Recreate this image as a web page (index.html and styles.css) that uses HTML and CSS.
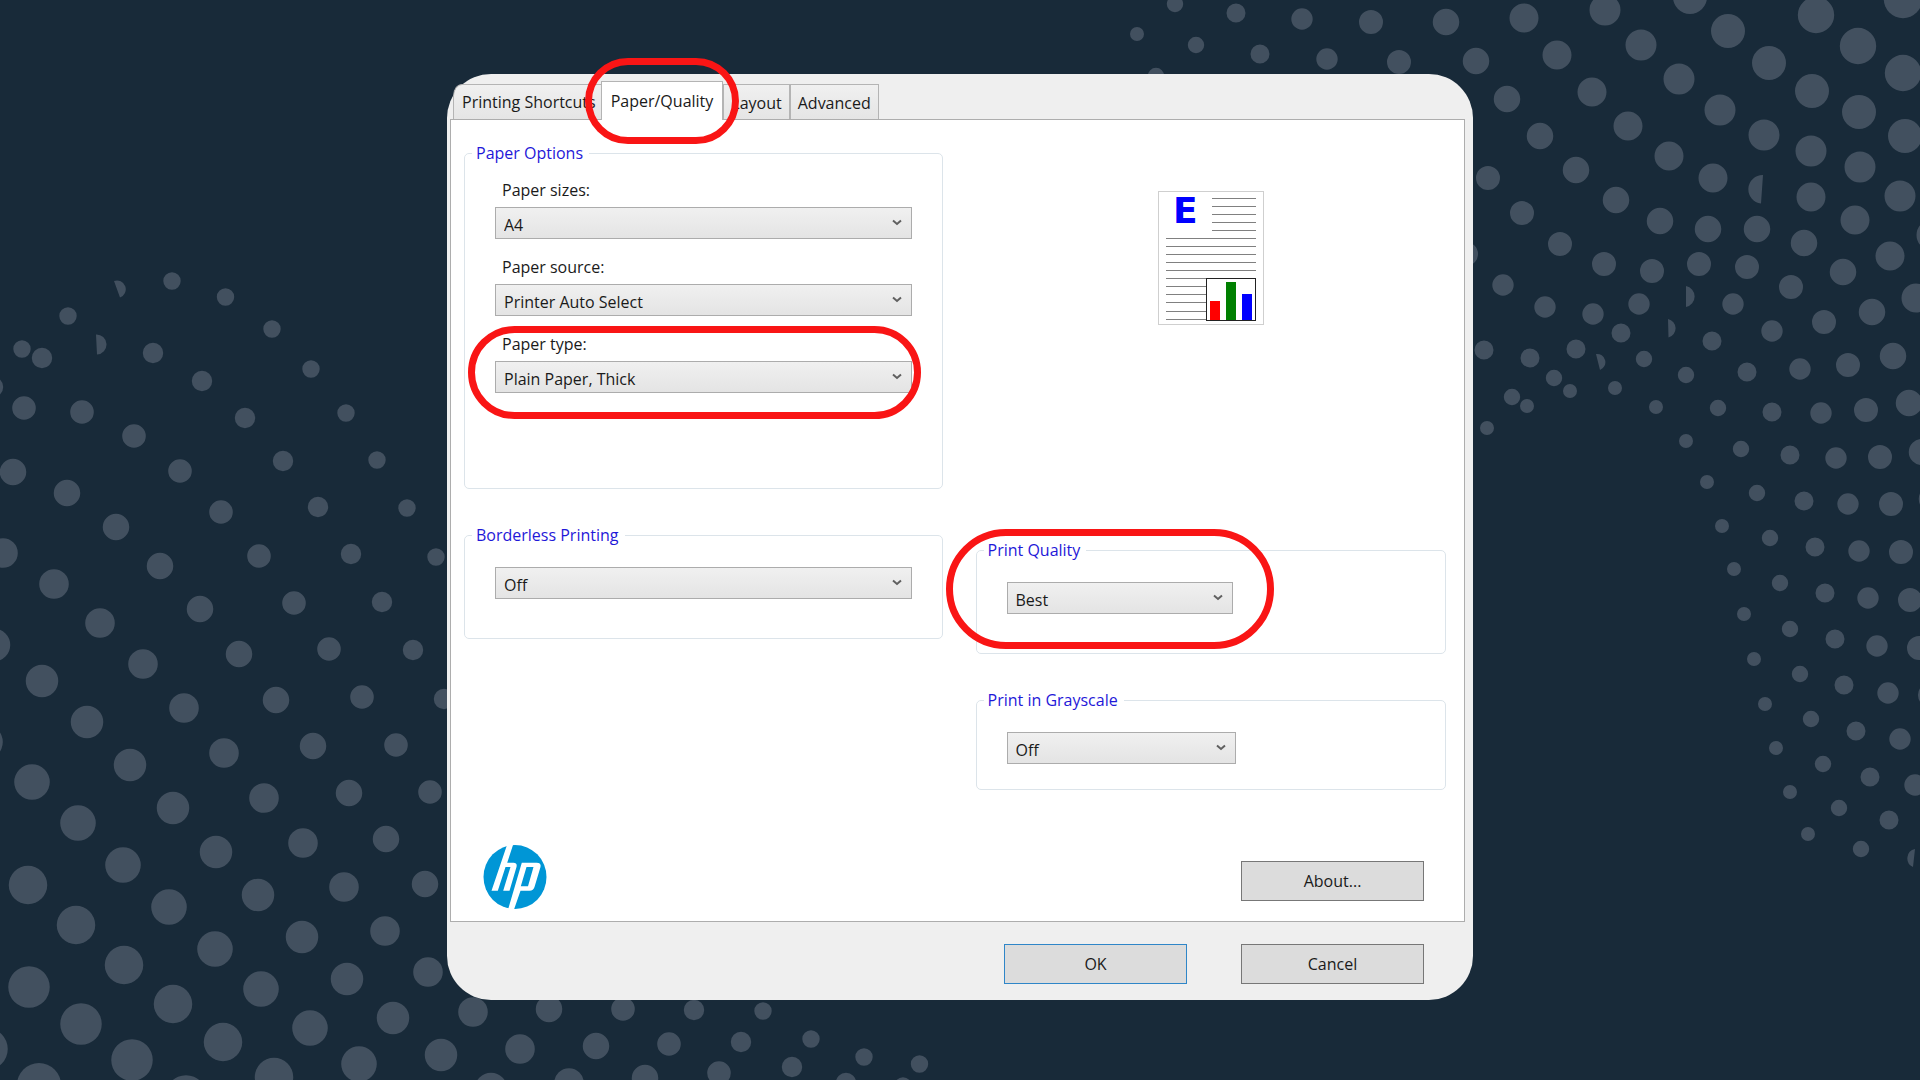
FILE: index.html
```html
<!DOCTYPE html>
<html lang="en">
<head>
	<meta charset="UTF-8">
	<title>Printing Preferences</title>
	<meta name="viewport" content="width=device-width, initial-scale=1.0">
	<link rel="stylesheet" href="styles.css">
</head>
<body>
	<!-- dotted backdrop: every zero-length segment is one round dot -->
	<svg class="backdrop" viewBox="0 0 1920 1080" preserveAspectRatio="xMidYMid slice" aria-hidden="true">
		<g class="backdrop--dots">
			<!-- left swirl -->
			<path stroke-width="17.4" d="M172 281h0M225.500 297h0M272 329h0M68 316h0M22 349h0M311 369h0M346 413h0M377 460h0M407 508h0M436 557h0M763 1011h0M811 1039h0M864 1057h0M919.500 1064h0M903 1086h0"/>
			<path stroke-width="20.400" d="M42 358h0M153 353h0M202 381h0M245 418h0M283 461h0M318 507h0M351 554h0M382 602h0M413 650h0M444 699h0M-7 387h0M694 1010h0M741 1042h0M792 1067h0M846 1083h0"/>
			<path stroke-width="23.600" d="M24 408h0M82 412h0M134 436h0M180 471h0M221 512h0M259 556h0M294 603h0M329 649h0M362 697h0M396 745h0M430 792h0M623 1009h0M669 1044h0M719 1073h0"/>
			<path stroke-width="26.500" d="M13 472h0M67 493h0M116 527h0M160 566h0M200 609h0M239 654h0M276 700h0M313 746h0M349 793h0M386 839h0M425 884h0M549 1009h0M596 1046h0M645 1078h0"/>
			<path stroke-width="29.600" d="M3 553h0M54 584h0M100 623h0M143 664h0M184 708h0M224 753h0M264 798h0M303 843h0M344 887h0M385 931h0M428 972h0M473 1012h0M520 1049h0M569 1083h0"/>
			<path stroke-width="32.500" d="M-6 645h0M42 681h0M87 722h0M130 765h0M173 808h0M216 852h0M258 895h0M302 937h0M347 979h0M393 1018h0M441 1055h0M491 1089h0"/>
			<path stroke-width="35.600" d="M-15 742h0M32 782h0M78 823h0M123 865h0M169 907h0M215 949h0M261 989h0M310 1028h0M359 1064h0"/>
			<path stroke-width="38.500" d="M28 885h0M76 925h0M124 965h0M173 1004h0M223 1042h0M274 1077h0"/>
			<path stroke-width="41.500" d="M29 987h0M81 1024h0M132 1060h0M186 1096h0M-13 1049h0"/>
			<path stroke-width="44" d="M39 1085h0"/>
			<!-- right swirl -->
			<path stroke-width="14" d="M1137 34h0M1527 406h0M1570 391h0M1615 388h0M1656 407h0M1487 428h0M1686 441h0M1707 482h0M1722 526h0M1734 569h0M1744 614h0M1754 659h0M1765 704h0M1776 748h0M1790 792h0M1808 834h0"/>
			<path stroke-width="16.400" d="M1175 4h0M1196 45h0M1156 76h0M1554 378h0M1512 397h0M1644 359h0M1686 375h0M1718 408h0M1741 449h0M1757 493h0M1770 538h0M1780 583h0M1790 629h0M1800 674h0M1811 719h0M1823 764h0M1839 808h0M1861 849h0"/>
			<path stroke-width="19" d="M1236 13h0M1260 54h0M1484 350h0M1530 358h0M1576 349h0M1621 333h0M1712 341h0M1747 372h0M1772 412h0M1790 455h0M1804 501h0M1815 547h0M1825 593h0M1835 639h0M1844 685h0M1856 731h0M1870 777h0M1889 820h0"/>
			<path stroke-width="21.400" d="M1302 19h0M1327 59h0M1503 285h0M1545 307h0M1593 314h0M1639 304h0M1733 304h0M1772 331h0M1800 369h0M1821 413h0M1836 458h0M1848 504h0M1859 551h0M1868 598h0M1877 646h0M1888 693h0M1900 739h0M1915 785h0"/>
			<path stroke-width="24" d="M1371 22h0M1399 62h0M1466 254h0M1488 178h0M1522 213h0M1560 244h0M1604 264h0M1652 271h0M1699 264h0M1747 267h0M1791 287h0M1824 322h0M1848 365h0M1866 410h0M1880 457h0M1891 504h0M1901 552h0M1910 600h0M1919 648h0M1930 695h0"/>
			<path stroke-width="26.500" d="M1446 22h0M1476 61h0M1507 99h0M1540 136h0M1576 170h0M1616 200h0M1660 221h0M1708 229h0M1757 229h0M1804 243h0M1843 272h0M1872 312h0M1893 356h0M1909 403h0M1922 452h0M1932 499h0"/>
			<path stroke-width="29" d="M1524 18h0M1557 55h0M1592 92h0M1628 126h0M1669 156h0M1713 178h0M1811 197h0M1855 220h0M1890 256h0M1916 298h0"/>
			<path stroke-width="31" d="M1605 10h0M1641 45h0M1679 79h0M1720 110h0M1764 135h0M1811 151h0M1860 167h0M1900 196h0M1932 235h0"/>
			<path stroke-width="34" d="M1690 -3h0M1728 31h0M1769 63h0M1812 91h0M1859 112h0M1905 136h0"/>
			<path stroke-width="36.400" d="M1816 15h0M1858 46h0M1903 73h0"/>
			<path stroke-width="38.500" d="M1903 -1h0"/>
		</g>
		<!-- half dots on the seams -->
		<path class="backdrop--halves" d="M114 281A8.700 8.700 0 0 1 120 297.500ZM96 334.500A10 10 0 0 1 97 354.500ZM1763 175A14.300 14.300 0 0 0 1761 203.500ZM1686 286A10.700 10.700 0 0 1 1686 307ZM1668 319A9.500 9.500 0 0 1 1668.500 337.500ZM1596 354A8.300 8.300 0 0 1 1600 370ZM1915 849A9.500 9.500 0 0 0 1913 867Z"/>
	</svg>

	<main class="window">
		<div class="tabs" role="tablist">
			<button class="tab tab-first" role="tab" type="button">Printing Shortcuts</button>
			<button class="tab tab-active" role="tab" type="button" aria-selected="true">Paper/Quality<span class="mark mark-tab"></span></button>
			<button class="tab" role="tab" type="button">Layout</button>
			<button class="tab" role="tab" type="button">Advanced</button>
		</div>

		<form class="panel">
			<div class="columns">
				<div class="column">
					<fieldset class="group group-paper">
						<legend class="group--title">Paper Options</legend>
						<div class="group--fields">
							<div class="field">
								<label class="field--label" for="paperSize">Paper sizes:</label>
								<div class="dropdown">
									<select class="dropdown--select" id="paperSize"><option>A4</option></select>
									<svg class="dropdown--arrow" viewBox="0 0 10 7"><path d="M1 1.500 5 5 9 1.500"/></svg>
								</div>
							</div>
							<div class="field">
								<label class="field--label" for="paperSource">Paper source:</label>
								<div class="dropdown">
									<select class="dropdown--select" id="paperSource"><option>Printer Auto Select</option></select>
									<svg class="dropdown--arrow" viewBox="0 0 10 7"><path d="M1 1.500 5 5 9 1.500"/></svg>
								</div>
							</div>
							<div class="field">
								<label class="field--label" for="paperType">Paper type:</label>
								<div class="dropdown">
									<select class="dropdown--select" id="paperType"><option>Plain Paper, Thick</option></select>
									<svg class="dropdown--arrow" viewBox="0 0 10 7"><path d="M1 1.500 5 5 9 1.500"/></svg>
								</div>
								<span class="mark mark-type"></span>
							</div>
						</div>
					</fieldset>

					<fieldset class="group">
						<legend class="group--title" id="borderlessTitle">Borderless Printing</legend>
						<div class="group--single">
							<div class="dropdown">
								<select class="dropdown--select" aria-labelledby="borderlessTitle"><option>Off</option></select>
								<svg class="dropdown--arrow" viewBox="0 0 10 7"><path d="M1 1.500 5 5 9 1.500"/></svg>
							</div>
						</div>
					</fieldset>
				</div>

				<div class="column">
					<div class="preview">
						<svg class="preview--page" viewBox="0 0 106 134" role="img" aria-label="Page preview">
							<rect x="0.500" y="0.500" width="105" height="133" fill="#fff" stroke="#cfcfcf"/>
							<path stroke="#808080" d="M54 7.500h44M54 15.500h44M54 23.500h44M54 31.500h44M54 39.500h44M8 47.500h90M8 55.500h90M8 63.500h90M8 71.500h90M8 79.500h90M8 87.500h40M8 95.500h40M8 103.500h40M8 111.500h40M8 120.500h40M8 128.500h40"/>
							<text class="preview--letter" x="15" y="32">E</text>
							<rect x="48.500" y="87.500" width="49" height="42" fill="#fff" stroke="#222"/>
							<path fill="#f00" d="M52 110h10v19H52z"/>
							<path fill="#008000" d="M68 91h10v38H68z"/>
							<path fill="#00f" d="M84 103h10v26H84z"/>
						</svg>
					</div>

					<fieldset class="group">
						<legend class="group--title" id="qualityTitle">Print Quality</legend>
						<div class="group--single">
							<div class="dropdown dropdown-quality">
								<select class="dropdown--select" aria-labelledby="qualityTitle"><option>Best</option></select>
								<svg class="dropdown--arrow" viewBox="0 0 10 7"><path d="M1 1.500 5 5 9 1.500"/></svg>
								<span class="mark mark-quality"></span>
							</div>
						</div>
					</fieldset>

					<fieldset class="group group-low">
						<legend class="group--title" id="grayscaleTitle">Print in Grayscale</legend>
						<div class="group--single">
							<div class="dropdown dropdown-grayscale">
								<select class="dropdown--select" aria-labelledby="grayscaleTitle"><option>Off</option></select>
								<svg class="dropdown--arrow" viewBox="0 0 10 7"><path d="M1 1.500 5 5 9 1.500"/></svg>
							</div>
						</div>
					</fieldset>
				</div>
			</div>

			<div class="brand">
				<svg class="brand--logo" viewBox="0 0 63 64" role="img" aria-label="HP">
					<ellipse cx="31.500" cy="32" rx="31.500" ry="32" fill="#0096d6"/>
					<path fill="#fff" d="M23.500 0H29.500L23.700 17.700H30Q34 17.700 33 22L26 45.700H19.700L27 22H22L14.300 45.700H8z"/>
					<path fill="#fff" fill-rule="evenodd" d="M38.300 17.700H53Q58 17.700 57 22L51 42Q50 45.700 46 45.700H37L30.700 64H24.700zM43 22 37.300 41.300H44.500L50 22z"/>
				</svg>
				<button class="button button-about" type="button">About...</button>
			</div>
		</form>

		<div class="actions">
			<button class="button button-default" type="button">OK</button>
			<button class="button" type="button">Cancel</button>
		</div>
	</main>
</body>
</html>
```
FILE: styles.css
```css
* {
	box-sizing: border-box;
}

body {
	margin: 0;
	min-height: 100vh;
	padding: 74px 16px 80px;
	background: #182a39;
	color: #1a1a1a;
	font-family: "Open Sans", "Noto Sans", sans-serif;
	font-size: 16px;
	line-height: 24px;
}

button,
select {
	color: inherit;
	font: inherit;
}

.backdrop {
	position: fixed;
	inset: 0;
	z-index: -1;
	width: 100%;
	height: 100%;
}

.backdrop--dots {
	fill: none;
	stroke: #42505f;
	stroke-linecap: round;
}

.backdrop--halves {
	fill: #42505f;
}

.window {
	max-width: 1026px;
	margin: 0 auto;
	padding: 7px 8px 16px 3px;
	border-radius: 44px;
	background: #efefef;
}

/* tabs */
.tabs {
	display: flex;
	align-items: flex-end;
	padding-left: 3px;
}

.tab {
	height: 35px;
	padding: 2px 7px 0;
	border: 1px solid #b4b4b4;
	border-bottom: none;
	background: linear-gradient(#f0f0f0, #e5e5e5);
	white-space: nowrap;
}

.tab-first {
	padding: 0 5px 1px 8px;
	border-right: none;
	border-top-left-radius: 9px 12px;
}

.tab-active {
	position: relative;
	z-index: 1;
	height: 39px;
	margin-bottom: -1px;
	padding: 0 9px;
	background: #fff;
}

/* red highlights over the controls */
.mark {
	position: absolute;
	border: 7px solid #f91515;
	border-radius: 60px;
	pointer-events: none;
}

.mark-tab {
	inset: -24px -17px;
}

.mark-type {
	inset: -6px -9px -26px -27px;
}

.mark-quality {
	inset: -53px -41px -35px -61px;
}

/* page of the active tab */
.panel {
	padding: 21px 18px 12px 13px;
	border: 1px solid #adadad;
	background: #fff;
}

.columns {
	display: grid;
	grid-template-columns: 478fr 470fr;
	gap: 33px;
}

.column {
	display: flex;
	flex-direction: column;
	gap: 34px;
}

.group {
	min-width: 0;
	min-height: 116px;
	margin: 0;
	padding: 0;
	border: 1px solid #dce4ea;
	border-radius: 5px;
}

.group-paper {
	min-height: 348px;
}

.group-low {
	min-height: 102px;
}

.group--title {
	margin-left: 7px;
	padding: 0 6px 0 4px;
	color: #1f18d8;
}

.group--fields {
	display: flex;
	flex-direction: column;
	gap: 16px;
	padding: 13px 30px;
}

.group--single {
	padding: 20px 30px 0;
}

.field {
	display: flex;
	flex-direction: column;
	gap: 5px;
	position: relative;
}

.field--label {
	padding-left: 7px;
}

.dropdown {
	display: grid;
	align-items: center;
	position: relative;
}

.dropdown-quality {
	max-width: 226px;
}

.dropdown-grayscale {
	max-width: 229px;
}

.dropdown--select,
.dropdown--arrow {
	grid-area: 1 / 1;
}

.dropdown--select {
	appearance: none;
	width: 100%;
	height: 32px;
	padding: 4px 32px 0 8px;
	border: 1px solid #acacac;
	border-radius: 0;
	background: linear-gradient(#f0f0f0, #e4e4e4);
}

.dropdown--arrow {
	justify-self: end;
	width: 10px;
	height: 7px;
	margin: 0 10px 2px 0;
	fill: none;
	stroke: #606060;
	stroke-width: 2;
	pointer-events: none;
}

.preview {
	display: flex;
	justify-content: center;
	height: 363px;
	padding-top: 50px;
}

.preview--page {
	width: 106px;
	height: 134px;
}

.preview--letter {
	fill: #00f;
	font-family: "DejaVu Sans", sans-serif;
	font-size: 36px;
	font-weight: bold;
}

.brand {
	display: flex;
	justify-content: space-between;
	align-items: center;
	margin-top: 55px;
	padding: 0 22px 0 19px;
}

.brand--logo {
	width: 64px;
	height: 64px;
}

/* buttons */
.button {
	width: 183px;
	height: 40px;
	padding: 0;
	border: 1px solid #777;
	background: #dcdcdc;
}

.button-about {
	margin-top: 8px;
}

.button-default {
	border-color: #2f86c8;
}

.actions {
	display: flex;
	justify-content: flex-end;
	gap: 54px;
	padding: 22px 41px 0 0;
}
```
